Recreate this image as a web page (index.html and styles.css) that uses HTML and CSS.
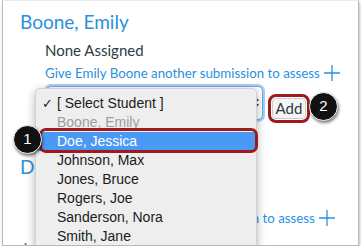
FILE: index.html
```html
<!DOCTYPE html>
<html lang="en">
<head>
    <meta charset="UTF-8">
    <title>Peer Review Assignments</title>
    <link rel="stylesheet" href="styles.css">
</head>
<body>
    <div class="frame">
        <div class="student">
            <h2 class="name">Boone, Emily</h2>
            <p class="none">None Assigned</p>
            <a class="give" href="#">Give Emily Boone another submission to assess<svg class="plus" width="16" height="16" viewBox="0 0 16 16"><path d="M8 0v16M0 8h16"/></svg></a>
            <div class="assign-row">
                <div class="select-box">
                    <svg class="spinner" width="7" height="13" viewBox="0 0 7 13"><path d="M3.5 0L7 5H0z M3.5 13L7 8H0z"/></svg>
                </div>
                <span class="callout-ring"><button class="add-btn">Add</button></span>
            </div>
        </div>

        <div class="student">
            <h2 class="name">Doe, Jessica</h2>
            <p class="none">None Assigned</p>
            <a class="give" href="#">Give Jessica Doe another submission to assess<svg class="plus" width="16" height="16" viewBox="0 0 16 16"><path d="M8 0v16M0 8h16"/></svg></a>
        </div>

        <div class="student last">
            <h2 class="name">Johnson, Max</h2>
        </div>

        <!-- open select menu -->
        <ul class="menu">
            <li class="checked"><span class="check">✓</span>[ Select Student ]</li>
            <li class="disabled">Boone, Emily</li>
            <li class="active">Doe, Jessica</li>
            <li>Johnson, Max</li>
            <li>Jones, Bruce</li>
            <li>Rogers, Joe</li>
            <li>Sanderson, Nora</li>
            <li>Smith, Jane</li>
        </ul>

        <span class="badge badge-1">1</span>
        <span class="badge badge-2">2</span>
    </div>
</body>
</html>
```

FILE: styles.css
```css
body {
    margin: 0;
    background: #fff;
}
.frame {
    position: relative;
    margin-left: 2px;
    width: 357px;
    height: 246px;
    padding-left: 17px;
    box-sizing: border-box;
    border: 1px solid #b9b9b9;
    border-top-color: #ececec;
    box-shadow: 1px 2px 3px rgba(0, 0, 0, 0.25);
    overflow: hidden;
    font-family: Lato, "Open Sans", sans-serif;
    color: #2d3b45;
}
.student {
    margin-bottom: 2px;
}
.student:first-child {
    padding-top: 9px;
}
.student.last {
    padding-top: 9px;
}
.name {
    margin: 0;
    font-size: 19px;
    font-weight: normal;
    line-height: 24px;
    color: #2a90dd;
}
.none {
    margin: 6px 0 0 25px;
    font-size: 15px;
    line-height: 20px;
}
.give {
    display: block;
    margin: 4px 0 0 25px;
    font-size: 13.3px;
    line-height: 18px;
    color: #2a90dd;
    text-decoration: none;
}
.plus {
    margin-left: 4px;
    vertical-align: -3px;
    stroke: #2a90dd;
    stroke-width: 1.3;
    fill: none;
}
.assign-row {
    display: flex;
    align-items: flex-start;
    margin: 4px 0 32px 26px;
}
.select-box {
    position: relative;
    width: 217px;
    height: 34px;
    box-sizing: border-box;
    border: 1px solid #6aa8e8;
    border-radius: 5px;
    box-shadow: 0 0 0 2px #a9cff5;
    background: #fff;
}
.spinner {
    position: absolute;
    right: 3px;
    top: 9px;
    fill: #333;
}
.callout-ring {
    margin: 8px 0 0 5px;
    padding: 1px;
    border: 3px solid #9b1b1e;
    border-radius: 8px;
    background: #fff;
    display: flex;
}
.add-btn {
    width: 34px;
    height: 21px;
    padding: 0;
    border: 1px solid #c7cdd1;
    border-radius: 4px;
    background: #f5f5f5;
    font-family: Lato, sans-serif;
    font-size: 15px;
    line-height: 19px;
    color: #2d3b45;
}
.menu {
    position: absolute;
    left: 32px;
    top: 87px;
    width: 220px;
    margin: 0;
    padding: 5px 0 20px;
    list-style: none;
    background: #eeeeee;
    border: 1px solid rgba(0, 0, 0, 0.12);
    border-radius: 5px;
    box-shadow: 0 3px 10px rgba(0, 0, 0, 0.3);
    font-family: "Liberation Sans", Arial, sans-serif;
    font-size: 14px;
    color: #1b1b1b;
}
.menu li {
    position: relative;
    height: 19px;
    line-height: 19px;
    padding-left: 21px;
}
.menu .check {
    position: absolute;
    left: 6px;
    font-size: 13px;
}
.menu .disabled {
    color: #9d9d9d;
}
.menu .active {
    background: #4a9af5;
    color: #fff;
}
.menu .active::after {
    content: "";
    position: absolute;
    left: 3px;
    right: -2px;
    top: -4px;
    bottom: -2px;
    border: 3px solid #9b1b1e;
    border-radius: 7px;
}
.badge {
    position: absolute;
    width: 29px;
    height: 29px;
    box-sizing: border-box;
    border: 1.5px solid #fff;
    border-radius: 50%;
    background: #111;
    box-shadow: 1px 2px 3px rgba(0, 0, 0, 0.5);
    color: #fff;
    font-family: "Liberation Sans", Arial, sans-serif;
    font-size: 15px;
    line-height: 26px;
    text-align: center;
}
.badge-1 {
    left: 10px;
    top: 124px;
}
.badge-2 {
    left: 306px;
    top: 91px;
}
```
